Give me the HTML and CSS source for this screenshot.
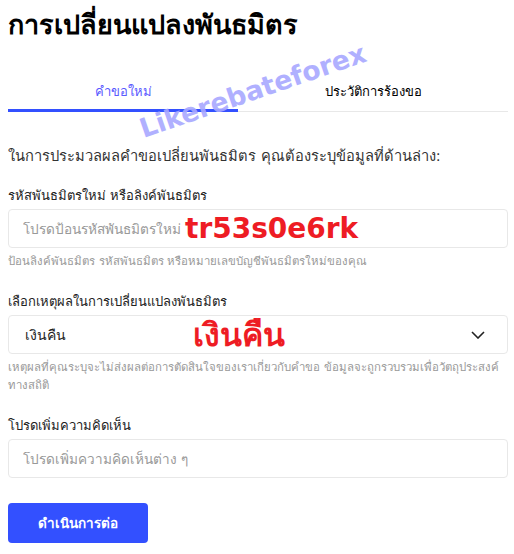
FILE: index.html
```html
<!DOCTYPE html>
<html lang="th">
  <head>
    <meta charset="utf-8"/>
    <title>การเปลี่ยนแปลงพันธมิตร</title>
    <link rel="stylesheet" href="styles.css">
  </head>

  <body>
    <div class="page">
      <h1 class="title">การเปลี่ยนแปลงพันธมิตร</h1>

      <div class="tabs">
        <div class="tab active">คำขอใหม่</div>
        <div class="tab">ประวัติการร้องขอ</div>
      </div>

      <p class="intro">ในการประมวลผลคำขอเปลี่ยนพันธมิตร คุณต้องระบุข้อมูลที่ด้านล่าง:</p>

      <form class="form">
        <div class="field">
          <label for="code">รหัสพันธมิตรใหม่ หรือลิงค์พันธมิตร</label>
          <div class="box">
            <input type="text" id="code" placeholder="โปรดป้อนรหัสพันธมิตรใหม่">
            <span class="stamp code-stamp">tr53s0e6rk</span>
          </div>
          <span class="hint">ป้อนลิงค์พันธมิตร รหัสพันธมิตร หรือหมายเลขบัญชีพันธมิตรใหม่ของคุณ</span>
        </div>

        <div class="field">
          <label for="reason">เลือกเหตุผลในการเปลี่ยนแปลงพันธมิตร</label>
          <div class="box select">
            <span class="value">เงินคืน</span>
            <span class="stamp reason-stamp">เงินคืน</span>
            <svg class="chevron" width="14" height="8" viewBox="0 0 14 8">
              <path d="M1 1l6 6 6-6" fill="none" stroke="#222" stroke-width="1.6"/>
            </svg>
          </div>
          <span class="hint">เหตุผลที่คุณระบุจะไม่ส่งผลต่อการตัดสินใจของเราเกี่ยวกับคำขอ ข้อมูลจะถูกรวบรวมเพื่อวัตถุประสงค์ทางสถิติ</span>
        </div>

        <div class="field">
          <label for="comment">โปรดเพิ่มความคิดเห็น</label>
          <div class="box">
            <input type="text" id="comment" placeholder="โปรดเพิ่มความคิดเห็นต่าง ๆ">
          </div>
        </div>

        <button type="button" class="submit">ดำเนินการต่อ</button>
      </form>

      <div class="watermark">Likerebateforex</div>
    </div>
  </body>
</html>
```

FILE: styles.css
```css
* {
  box-sizing: border-box;
}

body {
  margin: 0;
  background-color: #fff;
  color: #222;
  font-family: Tahoma, "DejaVu Sans", "Noto Sans", sans-serif;
}

.page {
  position: relative;
  padding: 7px 6px 0 8px;
}

.title {
  margin: 0;
  font-size: 27px;
  line-height: 36px;
  font-weight: bold;
  color: #000;
}

.tabs {
  display: flex;
  margin-top: 39px;
  border-bottom: 1px solid #e8e8e8;
}

.tab {
  flex: 1;
  text-align: center;
  font-size: 13px;
  line-height: 20px;
  padding-bottom: 7px;
  color: #000;
}

.tab.active {
  flex: 0 0 230px;
  color: #5a5aff;
  border-bottom: 3px solid #3350ff;
  margin-bottom: -1px;
}

.intro {
  margin: 33px 0 0;
  font-size: 14.7px;
  line-height: 22px;
  color: #333;
}

.form {
  display: flex;
  flex-direction: column;
  margin-top: 20px;
}

.field {
  display: flex;
  flex-direction: column;
  margin-bottom: 23px;
}

.field label {
  font-size: 13px;
  line-height: 18px;
  margin-bottom: 4px;
}

.box {
  position: relative;
  height: 39px;
  border: 1px solid #e8e8e8;
  border-radius: 4px;
  display: flex;
  align-items: center;
}

.box input {
  width: 100%;
  height: 100%;
  border: none;
  background: transparent;
  padding: 0 14px;
  font: 13.6px Tahoma, "DejaVu Sans", sans-serif;
  color: #222;
  outline: none;
}

.box input::placeholder {
  color: #999;
}

.select {
  padding: 0 16px;
  justify-content: space-between;
}

.select .value {
  font-size: 14px;
}

.chevron {
  margin-right: 6px;
}

.hint {
  margin-top: 4px;
  font-size: 11.4px;
  line-height: 18px;
  color: #999;
}

.stamp {
  position: absolute;
  color: #ee1c24;
  font-family: "DejaVu Sans", sans-serif;
  font-weight: bold;
  font-size: 28px;
}

.code-stamp {
  left: 176px;
}

.reason-stamp {
  left: 184px;
  font-size: 32px;
}

.submit {
  width: 140px;
  height: 40px;
  margin-top: 2px;
  border: none;
  border-radius: 4px;
  background-color: #3350ff;
  color: #fff;
  font: bold 13.5px Tahoma, "DejaVu Sans", sans-serif;
}

.watermark {
  position: absolute;
  left: 134px;
  top: 75px;
  transform: rotate(-19deg);
  color: #a8a8ff;
  font-family: "DejaVu Sans", sans-serif;
  font-weight: bold;
  font-size: 26.5px;
  opacity: 0.9;
}
```
